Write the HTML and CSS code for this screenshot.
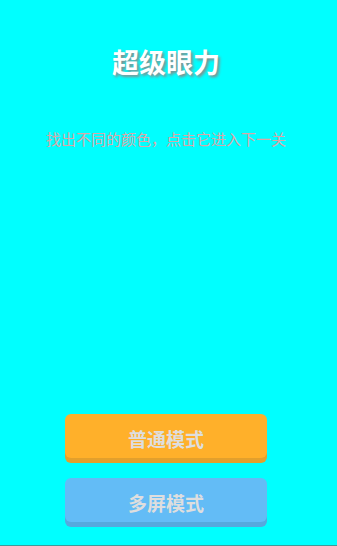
FILE: index.html
```html
<!DOCTYPE html>
<html lang="zh-CN">
<head>
    <meta charset="UTF-8">
    <meta name="viewport" content="width=device-width, initial-scale=1.0">
    <title>超级眼力</title>
    <link rel="stylesheet" href="styles.css">
</head>
<body>
    <div class="page">
        <h1 class="title">超级眼力</h1>
        <p class="tip">找出不同的颜色，点击它进入下一关</p>
        <div class="modes">
            <button class="mode-btn normal">普通模式</button>
            <button class="mode-btn multi">多屏模式</button>
        </div>
    </div>
</body>
</html>
```

FILE: styles.css
```css
body {
    margin: 0;
    background: #00ffff;
    font-family: "Noto Sans CJK SC", "Noto Sans", sans-serif;
}
.page {
    box-sizing: border-box;
    width: 100%;
    height: 546px;
    padding-right: 5px;
    border-bottom: 1px solid #3c9a9a;
    display: flex;
    flex-direction: column;
    align-items: center;
}
.title {
    margin: 47px 0 0;
    font-size: 27px;
    line-height: 30px;
    font-weight: bold;
    color: #fff;
    text-shadow: 2px 2px 3px #8a8a8a;
}
.tip {
    margin: 52px 0 0;
    font-size: 15px;
    line-height: 20px;
    color: #d8a8a8;
}
.modes {
    margin-top: 265px;
    display: flex;
    flex-direction: column;
    gap: 20px;
}
.mode-btn {
    width: 202px;
    height: 44px;
    border: none;
    border-radius: 6px;
    font-family: inherit;
    font-size: 19px;
    font-weight: bold;
    color: #dedede;
    padding: 4px 0 0;
    cursor: pointer;
}
.normal {
    background: #ffb02a;
    box-shadow: 0 5px 0 #e3a02c;
}
.multi {
    background: #63bcf6;
    box-shadow: 0 5px 0 #55a9de;
}
```
